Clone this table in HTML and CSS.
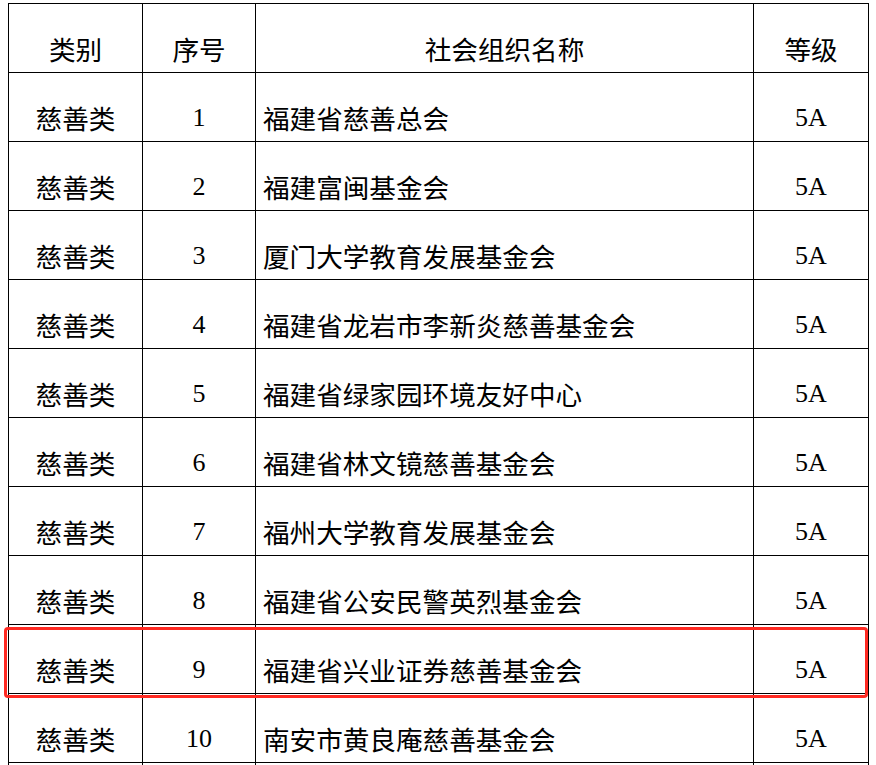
FILE: index.html
```html
<!DOCTYPE html>
<html lang="zh">
<head>
<meta charset="utf-8">
<link rel="stylesheet" href="styles.css">
</head>
<body>
<div class="wrap">
<table class="grid">
  <colgroup>
    <col class="c1"><col class="c2"><col class="c3"><col class="c4">
  </colgroup>
  <thead>
    <tr><th>类别</th><th>序号</th><th>社会组织名称</th><th>等级</th></tr>
  </thead>
  <tbody>
    <tr><td>慈善类</td><td class="num">1</td><td class="name">福建省慈善总会</td><td class="num">5A</td></tr>
    <tr><td>慈善类</td><td class="num">2</td><td class="name">福建富闽基金会</td><td class="num">5A</td></tr>
    <tr><td>慈善类</td><td class="num">3</td><td class="name">厦门大学教育发展基金会</td><td class="num">5A</td></tr>
    <tr><td>慈善类</td><td class="num">4</td><td class="name">福建省龙岩市李新炎慈善基金会</td><td class="num">5A</td></tr>
    <tr><td>慈善类</td><td class="num">5</td><td class="name">福建省绿家园环境友好中心</td><td class="num">5A</td></tr>
    <tr><td>慈善类</td><td class="num">6</td><td class="name">福建省林文镜慈善基金会</td><td class="num">5A</td></tr>
    <tr><td>慈善类</td><td class="num">7</td><td class="name">福州大学教育发展基金会</td><td class="num">5A</td></tr>
    <tr><td>慈善类</td><td class="num">8</td><td class="name">福建省公安民警英烈基金会</td><td class="num">5A</td></tr>
    <tr><td>慈善类</td><td class="num">9</td><td class="name">福建省兴业证券慈善基金会</td><td class="num">5A</td></tr>
    <tr><td>慈善类</td><td class="num">10</td><td class="name">南安市黄良庵慈善基金会</td><td class="num">5A</td></tr>
    <tr><td></td><td></td><td></td><td></td></tr>
  </tbody>
</table>
<div class="highlight"></div>
</div>
</body>
</html>
```
FILE: styles.css
```css
html, body {
  margin: 0;
  padding: 0;
  background: #ffffff;
  overflow: hidden;
}
body {
  width: 876px;
  height: 765px;
  font-family: "Noto Sans CJK SC", "Noto Sans", sans-serif;
  color: #000;
}
.wrap {
  position: relative;
  padding: 3px 0 0 8px;
}
.grid {
  border-collapse: collapse;
  table-layout: fixed;
  width: 860px;
}
.c1 { width: 134px; }
.c2 { width: 113px; }
.c3 { width: 498px; }
.c4 { width: 115px; }
.grid th,
.grid td {
  border: 1px solid #000;
  height: 69px;
  padding: 0 0 9px 0;
  box-sizing: border-box;
  vertical-align: bottom;
  text-align: center;
  font-size: 26.6px;
  line-height: 28px;
  font-weight: normal;
  white-space: nowrap;
}
.grid th {
  padding-bottom: 9px;
}
.grid td.name {
  text-align: left;
  padding-left: 7px;
}
.grid td.num {
  font-family: "Liberation Serif", "Times New Roman", serif;
  font-size: 26px;
}
.highlight {
  position: absolute;
  left: 4px;
  top: 627px;
  width: 864px;
  height: 71px;
  box-sizing: border-box;
  border: 3px solid #ff2a22;
  border-radius: 4px;
}
```
